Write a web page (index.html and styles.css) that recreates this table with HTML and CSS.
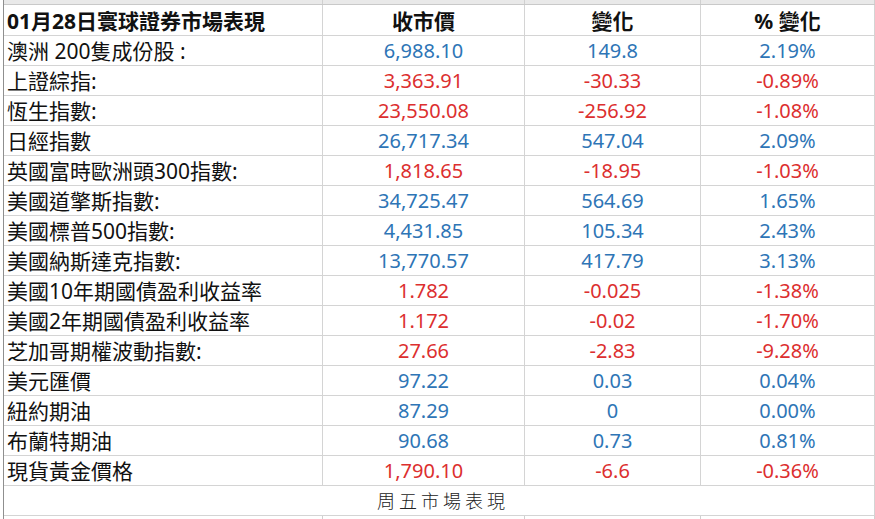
FILE: index.html
```html
<!DOCTYPE html>
<html lang="zh-Hant">
<head>
<meta charset="utf-8">
<title>01月28日寰球證券市場表現</title>
<link rel="stylesheet" href="styles.css">
</head>
<body>
<div class="sheet">
  <div class="band"><span></span><span></span><span></span><span></span></div>
  <div class="grid">
    <div class="cell head label">01月28日寰球證券市場表現</div>
    <div class="cell head">收市價</div>
    <div class="cell head">變化</div>
    <div class="cell head">% 變化</div>

    <div class="cell label">澳洲 200隻成份股 :</div>
    <div class="cell up">6,988.10</div><div class="cell up">149.8</div><div class="cell up">2.19%</div>

    <div class="cell label">上證綜指:</div>
    <div class="cell down">3,363.91</div><div class="cell down">-30.33</div><div class="cell down">-0.89%</div>

    <div class="cell label">恆生指數:</div>
    <div class="cell down">23,550.08</div><div class="cell down">-256.92</div><div class="cell down">-1.08%</div>

    <div class="cell label">日經指數</div>
    <div class="cell up">26,717.34</div><div class="cell up">547.04</div><div class="cell up">2.09%</div>

    <div class="cell label">英國富時歐洲頭300指數:</div>
    <div class="cell down">1,818.65</div><div class="cell down">-18.95</div><div class="cell down">-1.03%</div>

    <div class="cell label">美國道擎斯指數:</div>
    <div class="cell up">34,725.47</div><div class="cell up">564.69</div><div class="cell up">1.65%</div>

    <div class="cell label">美國標普500指數:</div>
    <div class="cell up">4,431.85</div><div class="cell up">105.34</div><div class="cell up">2.43%</div>

    <div class="cell label">美國納斯達克指數:</div>
    <div class="cell up">13,770.57</div><div class="cell up">417.79</div><div class="cell up">3.13%</div>

    <div class="cell label">美國10年期國債盈利收益率</div>
    <div class="cell down">1.782</div><div class="cell down">-0.025</div><div class="cell down">-1.38%</div>

    <div class="cell label">美國2年期國債盈利收益率</div>
    <div class="cell down">1.172</div><div class="cell down">-0.02</div><div class="cell down">-1.70%</div>

    <div class="cell label">芝加哥期權波動指數:</div>
    <div class="cell down">27.66</div><div class="cell down">-2.83</div><div class="cell down">-9.28%</div>

    <div class="cell label">美元匯價</div>
    <div class="cell up">97.22</div><div class="cell up">0.03</div><div class="cell up">0.04%</div>

    <div class="cell label">紐約期油</div>
    <div class="cell up">87.29</div><div class="cell up">0</div><div class="cell up">0.00%</div>

    <div class="cell label">布蘭特期油</div>
    <div class="cell up">90.68</div><div class="cell up">0.73</div><div class="cell up">0.81%</div>

    <div class="cell label">現貨黃金價格</div>
    <div class="cell down">1,790.10</div><div class="cell down">-6.6</div><div class="cell down">-0.36%</div>

    <div class="cell caption">周五市場表現</div>
  </div>
  <div class="stubs"><span></span><span></span><span></span><span></span></div>
</div>
</body>
</html>
```

FILE: styles.css
```css
* { box-sizing: border-box; }

html, body {
  margin: 0;
  padding: 0;
  background: #ffffff;
}

body {
  width: 875px;
  height: 519px;
  overflow: hidden;
  font-family: "Noto Sans", "Noto Sans CJK TC", sans-serif;
  color: #111111;
}

.sheet {
  margin-left: 3px;
  border-left: 1px solid #8f8f8f;
}

.band,
.grid,
.stubs {
  display: grid;
  grid-template-columns: 319px 202px 176px 1fr;
}

.band {
  height: 5px;
  background: #e9e9e9;
  border-bottom: 1px solid #c9c9c9;
}

.band span,
.stubs span {
  border-right: 1px solid #d0d0d0;
}

.stubs {
  height: 4px;
}

.grid {
  grid-template-rows: 31px;
  grid-auto-rows: 30px;
}

.cell {
  border-right: 1px solid #d4d4d4;
  border-bottom: 1px solid #d4d4d4;
  display: flex;
  align-items: flex-end;
  justify-content: center;
  font-size: 20px;
  line-height: 28px;
  white-space: nowrap;
  overflow: hidden;
}

.head {
  font-weight: 700;
  font-size: 21px;
}

.label {
  justify-content: flex-start;
  padding-left: 3px;
  font-size: 21px;
}

.up { color: #2e75b6; }
.down { color: #dc2f2f; }

.caption {
  grid-column: 1 / -1;
  font-size: 18px;
  font-weight: 300;
  letter-spacing: 4px;
  padding-left: 8px;
  color: #222222;
}
```
